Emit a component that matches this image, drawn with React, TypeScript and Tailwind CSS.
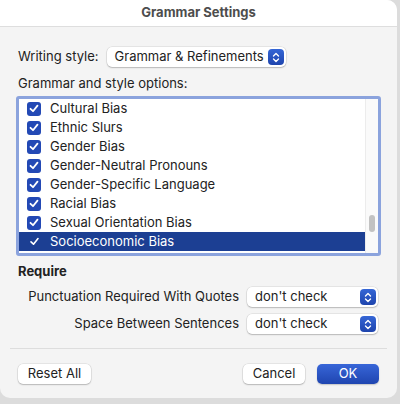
import React from "react";

const items = [
  "Cultural Bias",
  "Ethnic Slurs",
  "Gender Bias",
  "Gender-Neutral Pronouns",
  "Gender-Specific Language",
  "Racial Bias",
  "Sexual Orientation Bias",
  "Socioeconomic Bias",
];

function Stepper() {
  return (
    <div className="flex h-[16px] w-[16px] items-center justify-center rounded-[4px] bg-gradient-to-b from-[#3566d6] to-[#1e44ad]">
      <svg width="8" height="11" viewBox="0 0 8 11" fill="none" stroke="white" strokeWidth="1.4" strokeLinecap="round" strokeLinejoin="round">
        <path d="M1.5 4 L4 1.5 L6.5 4" />
        <path d="M1.5 7 L4 9.5 L6.5 7" />
      </svg>
    </div>
  );
}

function Check() {
  return (
    <div className="flex h-[14px] w-[14px] items-center justify-center rounded-[3px] bg-[#2349b5]">
      <svg width="10" height="9" viewBox="0 0 10 9" fill="none" stroke="white" strokeWidth="1.8" strokeLinecap="round" strokeLinejoin="round">
        <path d="M1.5 4.8 L4 7.2 L8.5 1.6" />
      </svg>
    </div>
  );
}

function Popup({ label, className }: { label: string; className: string }) {
  return (
    <div className={`flex h-[20px] items-center justify-between rounded-[5px] bg-white pl-[8px] pr-[2px] shadow-[0_0_0_0.5px_rgba(0,0,0,0.12),0_1px_1.5px_rgba(0,0,0,0.2)] ${className}`}>
      <span>{label}</span>
      <Stepper />
    </div>
  );
}

export default function App() {
  return (
    <div className="h-[404px] w-[400px] bg-[#dcdcdc] text-[13px] text-[#222222]" style={{ fontFamily: "Inter, 'Noto Sans', sans-serif" }}>
      <div className="h-[398px] w-[397px] overflow-hidden rounded-b-[10px] rounded-tr-[10px] bg-[#f4f4f4]">
        <div className="flex h-[27px] items-center justify-center border-b border-[#dedede] bg-white text-[13px] font-bold text-[#4d4d4d]">
          Grammar Settings
        </div>
        <div className="px-[18px] pt-[20px]">
          <div className="flex items-center gap-[8px]">
            <span>Writing style:</span>
            <Popup label="Grammar & Refinements" className="w-[179px]" />
          </div>
          <div className="mt-[8px] leading-[16px]">Grammar and style options:</div>
        </div>
        <div className="ml-[16px] mt-[5px] w-[365px] rounded-[3px] border-[3px] border-[#8ba3dd] bg-white">
          <div className="flex h-[154px]">
            <div className="flex-1">
              {items.map((it, i) => {
                const sel = i === items.length - 1;
                return (
                  <div
                    key={it}
                    className={
                      sel
                        ? "flex h-[19px] items-center gap-[9px] bg-[#1c3f93] pl-[8px] text-white"
                        : "flex h-[19px] items-center gap-[9px] pl-[8px]"
                    }
                  >
                    {sel ? (
                      <span className="flex w-[14px] justify-center">
                        <svg width="11" height="9" viewBox="0 0 10 9" fill="none" stroke="white" strokeWidth="1.6" strokeLinecap="round" strokeLinejoin="round">
                          <path d="M1.5 4.8 L4 7.2 L8.5 1.6" />
                        </svg>
                      </span>
                    ) : (
                      <Check />
                    )}
                    <span>{it}</span>
                  </div>
                );
              })}
            </div>
            <div className="flex w-[13px] flex-col border-l border-[#ececec] bg-[#fafafa] pt-[116px]">
              <div className="ml-[3px] h-[17px] w-[6px] rounded-full bg-[#c2c2c2]" />
            </div>
          </div>
        </div>
        <div className="px-[18px] pt-[7px]">
          <div className="font-bold leading-[16px]">Require</div>
          <div className="mt-[8px] flex flex-col gap-[7px] pr-[1px]">
            <div className="flex items-center justify-end gap-[8px]">
              <span>Punctuation Required With Quotes</span>
              <Popup label="don't check" className="w-[131px]" />
            </div>
            <div className="flex items-center justify-end gap-[8px]">
              <span>Space Between Sentences</span>
              <Popup label="don't check" className="w-[131px]" />
            </div>
          </div>
        </div>
        <div className="mx-[10px] mt-[14px] border-t border-[#dddddd]" />
        <div className="flex items-center px-[18px] pt-[15px]">
          <button className="h-[20px] w-[73px] rounded-[5px] bg-white shadow-[0_0_0_0.5px_rgba(0,0,0,0.12),0_1px_1.5px_rgba(0,0,0,0.2)]">Reset All</button>
          <div className="flex-1" />
          <button className="h-[20px] w-[62px] rounded-[5px] bg-white shadow-[0_0_0_0.5px_rgba(0,0,0,0.12),0_1px_1.5px_rgba(0,0,0,0.2)]">Cancel</button>
          <button className="ml-[12px] h-[20px] w-[62px] rounded-[5px] bg-gradient-to-b from-[#3866d8] to-[#1f45b0] text-white shadow-[0_1px_1.5px_rgba(0,0,0,0.2)]">OK</button>
        </div>
      </div>
    </div>
  );
}
